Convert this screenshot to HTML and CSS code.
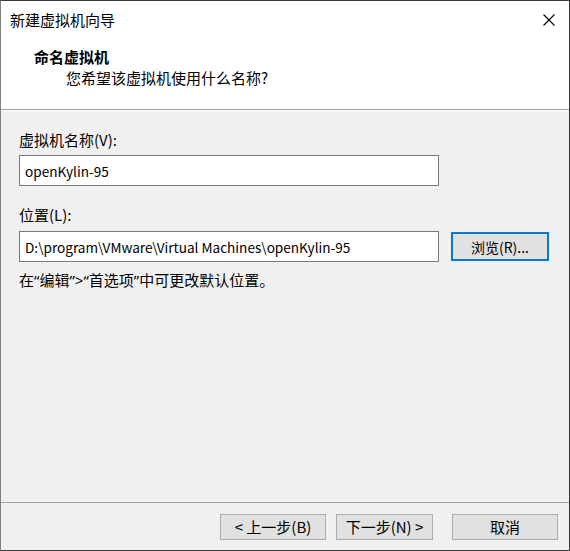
FILE: index.html
```html
<!DOCTYPE html>
<html lang="zh-CN">
<head>
<meta charset="utf-8">
<title>新建虚拟机向导</title>
<link rel="stylesheet" href="styles.css">
</head>
<body>
<div class="window">
  <div class="titlebar">
    <span class="title">新建虚拟机向导</span>
    <svg class="close" width="12" height="12" viewBox="0 0 12 12"><path d="M0.5 0.5 L11.5 11.5 M11.5 0.5 L0.5 11.5" stroke="#000" stroke-width="1.1" fill="none"/></svg>
  </div>
  <div class="header">
    <div class="h-title">命名虚拟机</div>
    <div class="h-sub">您希望该虚拟机使用什么名称?</div>
  </div>
  <div class="content">
    <div class="label label-first">虚拟机名称(V):</div>
    <input class="field" type="text" value="openKylin-95">
    <div class="label label-second">位置(L):</div>
    <div class="row">
      <input class="field" type="text" value="D:\program\VMware\Virtual Machines\openKylin-95">
      <button class="btn btn-focus">浏览(R)...</button>
    </div>
    <div class="note">在<span class="q">“</span>编辑<span class="q">”&gt;“</span>首选项<span class="q">”</span>中可更改默认位置。</div>
  </div>
  <div class="footer">
    <button class="btn btn-back">&lt; 上一步(B)</button>
    <button class="btn btn-next">下一步(N) &gt;</button>
    <button class="btn btn-cancel">取消</button>
  </div>
</div>
</body>
</html>
```
FILE: styles.css
```css
html, body {
  margin: 0;
  padding: 0;
  background: #f0f0f0;
}
body {
  font-family: "Noto Sans CJK SC", "Noto Sans", sans-serif;
  font-size: 15px;
  color: #000;
}
.window {
  box-sizing: border-box;
  width: 570px;
  height: 551px;
  border: 1px solid #3a3a3a;
  border-left-color: #808080;
  display: flex;
  flex-direction: column;
  background: #f0f0f0;
}
.titlebar {
  height: 37px;
  background: #fff;
  display: flex;
  align-items: center;
  padding-left: 9px;
}
.title {
  flex: 1;
  line-height: 37px;
  font-size: 15px;
}
.close {
  margin-right: 14px;
  display: block;
}
.header {
  box-sizing: border-box;
  height: 72px;
  background: #fff;
  border-bottom: 1px solid #a0a0a0;
  box-shadow: 0 1px 0 #ffffff;
  padding-left: 33px;
  padding-top: 9px;
}
.h-title {
  font-weight: bold;
  line-height: 20px;
}
.h-sub {
  line-height: 22px;
  margin-left: 32px;
}
.content {
  padding: 20px 0 0 18px;
  display: flex;
  flex-direction: column;
  align-items: flex-start;
}
.label {
  line-height: 20px;
}
.label-second {
  margin-top: 19px;
}
.field {
  box-sizing: border-box;
  width: 420px;
  height: 31px;
  margin: 5px 0 0 0;
  padding: 0 0 0 5px;
  border: 1px solid #7a7a7a;
  background: #fff;
  font-family: inherit;
  font-size: 13.6px;
  color: #000;
  outline: none;
}
.row {
  display: flex;
  align-items: center;
  margin-top: 1px;
}
.btn {
  box-sizing: border-box;
  height: 26px;
  border: 1px solid #adadad;
  background: #e1e1e1;
  font-family: inherit;
  font-size: 15px;
  color: #000;
  padding: 0;
  line-height: 22px;
}
.btn-focus {
  width: 98px;
  height: 29px;
  margin-left: 12px;
  margin-top: 5px;
  border: 2px solid #0078d7;
  font-size: 14px;
}
.note {
  margin-top: 8px;
  line-height: 20px;
}
.q {
  font-family: "Noto Sans", sans-serif;
}
.footer {
  margin-top: auto;
  border-top: 1px solid #a0a0a0;
  display: flex;
  justify-content: flex-end;
  padding: 11px 11px 10px 0;
}
.btn-back {
  width: 106px;
}
.btn-next {
  width: 97px;
  margin-left: 10px;
}
.btn-cancel {
  width: 106px;
  margin-left: 19px;
}
```
